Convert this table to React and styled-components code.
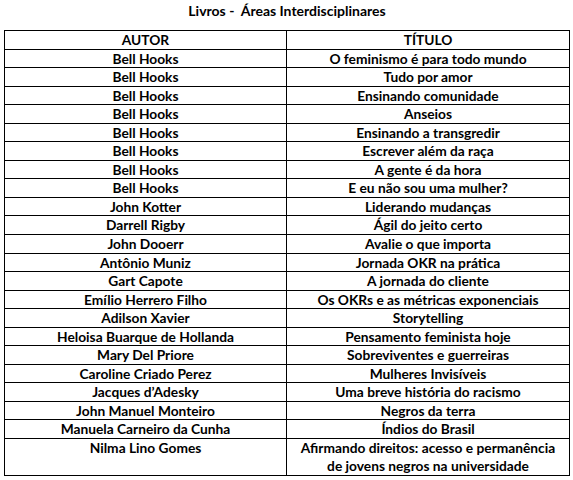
import React from 'react';
import styled, { createGlobalStyle } from 'styled-components';

const GlobalStyle = createGlobalStyle`
  html, body {
    margin: 0;
    padding: 0;
    background: #fff;
  }
  body {
    font-family: Lato, "Open Sans", sans-serif;
    color: #000;
  }
`;

const Page = styled.div`
  width: 573px;
  height: 480px;
  padding: 0 0 0 4px;
  box-sizing: border-box;
`;

const Title = styled.h1`
  margin: 0;
  width: 566px;
  height: 30px;
  padding-top: 2px;
  box-sizing: border-box;
  text-align: center;
  font-size: 14px;
  font-weight: 700;
  line-height: 18px;
  white-space: pre;
`;

const Table = styled.table`
  border-collapse: collapse;
  table-layout: fixed;
  width: 566px;
  font-size: 13.75px;
  font-weight: 700;
`;

const Cell = styled.td`
  border: 1px solid #000;
  padding: 0;
  text-align: center;
  vertical-align: top;
  height: ${p => (p.$tall ? '35.5px' : '17.55px')};
  line-height: 17.5px;
  white-space: nowrap;
`;

const Head = styled(Cell).attrs({ as: 'th' })`
  font-weight: 700;
`;

const books = [
  ['Bell Hooks', 'O feminismo é para todo mundo'],
  ['Bell Hooks', 'Tudo por amor'],
  ['Bell Hooks', 'Ensinando comunidade'],
  ['Bell Hooks', 'Anseios'],
  ['Bell Hooks', 'Ensinando a transgredir'],
  ['Bell Hooks', 'Escrever além da raça'],
  ['Bell Hooks', 'A gente é da hora'],
  ['Bell Hooks', 'E eu não sou uma mulher?'],
  ['John Kotter', 'Liderando mudanças'],
  ['Darrell Rigby', 'Ágil do jeito certo'],
  ['John Dooerr', 'Avalie o que importa'],
  ['Antônio Muniz', 'Jornada OKR na prática'],
  ['Gart Capote', 'A jornada do cliente'],
  ['Emílio Herrero Filho', 'Os OKRs e as métricas exponenciais'],
  ['Adilson Xavier', 'Storytelling'],
  ['Heloisa Buarque de Hollanda', 'Pensamento feminista hoje'],
  ['Mary Del Priore', 'Sobreviventes e guerreiras'],
  ['Caroline Criado Perez', 'Mulheres Invisíveis'],
  ['Jacques d’Adesky', 'Uma breve história do racismo'],
  ['John Manuel Monteiro', 'Negros da terra'],
  ['Manuela Carneiro da Cunha', 'Índios do Brasil'],
];

export default function App() {
  return (
    <Page>
      <GlobalStyle />
      <Title>{'Livros -  Áreas Interdisciplinares'}</Title>
      <Table>
        <colgroup>
          <col style={{ width: 282 }} />
          <col style={{ width: 283 }} />
        </colgroup>
        <thead>
          <tr>
            <Head>AUTOR</Head>
            <Head>TÍTULO</Head>
          </tr>
        </thead>
        <tbody>
          {books.map(([author, title], i) => (
            <tr key={i}>
              <Cell>{author}</Cell>
              <Cell>{title}</Cell>
            </tr>
          ))}
          <tr>
            <Cell $tall>Nilma Lino Gomes</Cell>
            <Cell $tall>
              Afirmando direitos: acesso e permanência
              <br />
              de jovens negros na universidade
            </Cell>
          </tr>
        </tbody>
      </Table>
    </Page>
  );
}
